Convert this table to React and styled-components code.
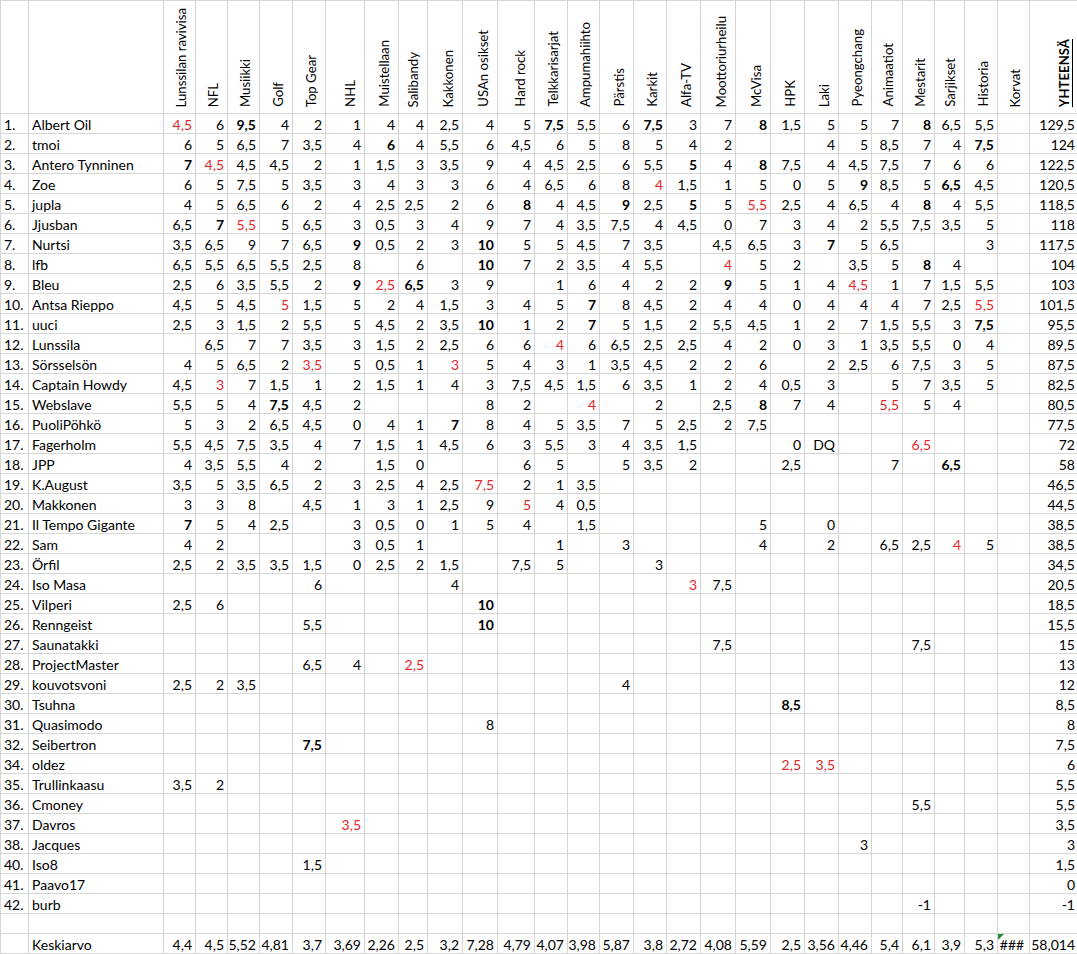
import React from "react";
import styled, { createGlobalStyle } from "styled-components";

const GlobalStyle = createGlobalStyle`
  html, body {
    margin: 0;
    padding: 0;
    background: #fff;
    overflow: hidden;
  }
`;

const Page = styled.div`
  width: 1077px;
  height: 954px;
  overflow: hidden;
  background: #fff;
`;

const Sheet = styled.table`
  width: 1078px;
  table-layout: fixed;
  border-collapse: collapse;
  font-family: Lato, "Liberation Sans", sans-serif;
  font-size: 14px;
  color: #000;

  td, th {
    border: 1px solid #d6d6d6;
  }
`;

const HeadRow = styled.tr`
  height: 113px;
`;

const Row = styled.tr`
  height: 20px;
`;

const HeadCell = styled.th`
  padding: 0 5px 3px 0;
  vertical-align: bottom;
  text-align: right;
  font-weight: normal;
  overflow: visible;
`;

const HeadLabel = styled.span`
  display: inline-block;
  writing-mode: vertical-rl;
  transform: rotate(180deg);
  white-space: nowrap;
  font-size: 13.2px;
  line-height: 18px;
  font-weight: ${(props) => (props.$total ? 700 : 400)};
  text-decoration: ${(props) => (props.$total ? "underline" : "none")};
  text-underline-offset: 1px;
`;

const RankCell = styled.td`
  padding: 0 0 0 3px;
  line-height: 17px;
  vertical-align: bottom;
  white-space: nowrap;
`;

const NameCell = styled.td`
  padding: 0 0 0 3px;
  line-height: 17px;
  vertical-align: bottom;
  white-space: nowrap;
  overflow: visible;
`;

const NumCell = styled.td`
  position: relative;
  padding: 0 3px 0 0;
  line-height: 17px;
  vertical-align: bottom;
  text-align: ${(props) => props.$align || "right"};
  white-space: nowrap;
  font-weight: ${(props) => (props.$bold ? 700 : 400)};
  color: ${(props) => (props.$red ? "#e3262b" : "#000")};
`;

const ErrorMark = styled.span`
  position: absolute;
  top: 0;
  left: 0;
  width: 0;
  height: 0;
  border-top: 6px solid #1f8a3b;
  border-right: 6px solid transparent;
`;

const widths = [
  28, 135, 32, 32, 32, 33, 33, 39, 34, 29, 35, 35, 37, 33, 32, 34, 33, 34, 35,
  35, 34, 34, 33, 31, 32, 30, 33, 32, 49,
];

const headers = [
  "Lunssilan ravivisa",
  "NFL",
  "Musiikki",
  "Golf",
  "Top Gear",
  "NHL",
  "Muistellaan",
  "Salibandy",
  "Kakkonen",
  "USAn osikset",
  "Hard rock",
  "Telkkarisarjat",
  "Ampumahiihto",
  "Pärstis",
  "Karkit",
  "Alfa-TV",
  "Moottoriurheilu",
  "McVisa",
  "HPK",
  "Laki",
  "Pyeongchang",
  "Animaatiot",
  "Mestarit",
  "Sarjikset",
  "Historia",
  "Korvat",
];

// "*" = lihavoitu, "!" = punainen
const dense = [
  ["1.", "Albert Oil", "!4,5|6|*9,5|4|2|1|4|4|2,5|4|5", "*7,5|5,5|6|*7,5|3|7|*8|1,5|5|5|7|*8|6,5|5,5|", "129,5"],
  ["2.", "tmoi", "6|5|6,5|7|3,5|4|*6|4|5,5|6|4,5", "6|5|8|5|4|2|||4|5|8,5|7|4|*7,5|", "124"],
  ["3.", "Antero Tynninen", "*7|!4,5|4,5|4,5|2|1|1,5|3|3,5|9|4", "4,5|2,5|6|5,5|*5|4|*8|7,5|4|4,5|7,5|7|6|6|", "122,5"],
  ["4.", "Zoe", "6|5|7,5|5|3,5|3|4|3|3|6|4", "6,5|6|8|!4|1,5|1|5|0|5|*9|8,5|5|*6,5|4,5|", "120,5"],
  ["5.", "jupla", "4|5|6,5|6|2|4|2,5|2,5|2|6|*8", "4|4,5|*9|2,5|*5|5|!5,5|2,5|4|6,5|4|*8|4|5,5|", "118,5"],
  ["6.", "Jjusban", "6,5|*7|!5,5|5|6,5|3|0,5|3|4|9|7", "4|3,5|7,5|4|4,5|0|7|3|4|2|5,5|7,5|3,5|5|", "118"],
  ["7.", "Nurtsi", "3,5|6,5|9|7|6,5|*9|0,5|2|3|*10|5", "5|4,5|7|3,5||4,5|6,5|3|*7|5|6,5|||3|", "117,5"],
  ["8.", "lfb", "6,5|5,5|6,5|5,5|2,5|8||6||*10|7", "2|3,5|4|5,5||!4|5|2||3,5|5|*8|4||", "104"],
  ["9.", "Bleu", "2,5|6|3,5|5,5|2|*9|!2,5|*6,5|3|9|", "1|6|4|2|2|*9|5|1|4|!4,5|1|7|1,5|5,5|", "103"],
  ["10.", "Antsa Rieppo", "4,5|5|4,5|!5|1,5|5|2|4|1,5|3|4", "5|*7|8|4,5|2|4|4|0|4|4|4|7|2,5|!5,5|", "101,5"],
  ["11.", "uuci", "2,5|3|1,5|2|5,5|5|4,5|2|3,5|*10|1", "2|*7|5|1,5|2|5,5|4,5|1|2|7|1,5|5,5|3|*7,5|", "95,5"],
  ["12.", "Lunssila", "|6,5|7|7|3,5|3|1,5|2|2,5|6|6", "!4|6|6,5|2,5|2,5|4|2|0|3|1|3,5|5,5|0|4|", "89,5"],
  ["13.", "Sörsselsön", "4|5|6,5|2|!3,5|5|0,5|1|!3|5|4", "3|1|3,5|4,5|2|2|6||2|2,5|6|7,5|3|5|", "87,5"],
  ["14.", "Captain Howdy", "4,5|!3|7|1,5|1|2|1,5|1|4|3|7,5", "4,5|1,5|6|3,5|1|2|4|0,5|3||5|7|3,5|5|", "82,5"],
];

const sparse = [
  ["15.", "Webslave", { 0: "5,5", 1: "5", 2: "4", 3: "*7,5", 4: "4,5", 5: "2", 9: "8", 10: "2", 12: "!4", 14: "2", 16: "2,5", 17: "*8", 18: "7", 19: "4", 21: "!5,5", 22: "5", 23: "4" }, "80,5"],
  ["16.", "PuoliPöhkö", { 0: "5", 1: "3", 2: "2", 3: "6,5", 4: "4,5", 5: "0", 6: "4", 7: "1", 8: "*7", 9: "8", 10: "4", 11: "5", 12: "3,5", 13: "7", 14: "5", 15: "2,5", 16: "2", 17: "7,5" }, "77,5"],
  ["17.", "Fagerholm", { 0: "5,5", 1: "4,5", 2: "7,5", 3: "3,5", 4: "4", 5: "7", 6: "1,5", 7: "1", 8: "4,5", 9: "6", 10: "3", 11: "5,5", 12: "3", 13: "4", 14: "3,5", 15: "1,5", 18: "0", 19: "DQ", 22: "!6,5" }, "72"],
  ["18.", "JPP", { 0: "4", 1: "3,5", 2: "5,5", 3: "4", 4: "2", 6: "1,5", 7: "0", 10: "6", 11: "5", 13: "5", 14: "3,5", 15: "2", 18: "2,5", 21: "7", 23: "*6,5" }, "58"],
  ["19.", "K.August", { 0: "3,5", 1: "5", 2: "3,5", 3: "6,5", 4: "2", 5: "3", 6: "2,5", 7: "4", 8: "2,5", 9: "!7,5", 10: "2", 11: "1", 12: "3,5" }, "46,5"],
  ["20.", "Makkonen", { 0: "3", 1: "3", 2: "8", 4: "4,5", 5: "1", 6: "3", 7: "1", 8: "2,5", 9: "9", 10: "!5", 11: "4", 12: "0,5" }, "44,5"],
  ["21.", "Il Tempo Gigante", { 0: "*7", 1: "5", 2: "4", 3: "2,5", 5: "3", 6: "0,5", 7: "0", 8: "1", 9: "5", 10: "4", 12: "1,5", 17: "5", 19: "0" }, "38,5"],
  ["22.", "Sam", { 0: "4", 1: "2", 5: "3", 6: "0,5", 7: "1", 11: "1", 13: "3", 17: "4", 19: "2", 21: "6,5", 22: "2,5", 23: "!4", 24: "5" }, "38,5"],
  ["23.", "Örfil", { 0: "2,5", 1: "2", 2: "3,5", 3: "3,5", 4: "1,5", 5: "0", 6: "2,5", 7: "2", 8: "1,5", 10: "7,5", 11: "5", 14: "3" }, "34,5"],
  ["24.", "Iso Masa", { 4: "6", 8: "4", 15: "!3", 16: "7,5" }, "20,5"],
  ["25.", "Vilperi", { 0: "2,5", 1: "6", 9: "*10" }, "18,5"],
  ["26.", "Renngeist", { 4: "5,5", 9: "*10" }, "15,5"],
  ["27.", "Saunatakki", { 16: "7,5", 22: "7,5" }, "15"],
  ["28.", "ProjectMaster", { 4: "6,5", 5: "4", 7: "!2,5" }, "13"],
  ["29.", "kouvotsvoni", { 0: "2,5", 1: "2", 2: "3,5", 13: "4" }, "12"],
  ["30.", "Tsuhna", { 18: "*8,5" }, "8,5"],
  ["31.", "Quasimodo", { 9: "8" }, "8"],
  ["32.", "Seibertron", { 4: "*7,5" }, "7,5"],
  ["34.", "oldez", { 18: "!2,5", 19: "!3,5" }, "6"],
  ["35.", "Trullinkaasu", { 0: "3,5", 1: "2" }, "5,5"],
  ["36.", "Cmoney", { 22: "5,5" }, "5,5"],
  ["37.", "Davros", { 5: "!3,5" }, "3,5"],
  ["38.", "Jacques", { 20: "3" }, "3"],
  ["40.", "Iso8", { 4: "1,5" }, "1,5"],
  ["41.", "Paavo17", {}, "0"],
  ["42.", "burb", { 22: "-1" }, "-1"],
];

const averages = [
  "4,4", "4,5", "5,52", "4,81", "3,7", "3,69", "2,26", "2,5", "3,2", "7,28",
  "4,79", "4,07", "3,98", "5,87", "3,8", "2,72", "4,08", "5,59", "2,5", "3,56",
  "4,46", "5,4", "6,1", "3,9", "5,3", "###",
];

const rows = [
  ...dense.map(([rank, name, left, right, total]) => ({
    rank,
    name,
    cells: [...left.split("|"), ...right.split("|")],
    total,
  })),
  ...sparse.map(([rank, name, map, total]) => ({
    rank,
    name,
    cells: headers.map((_, i) => map[i] || ""),
    total,
  })),
];

function Value({ raw }) {
  const bold = raw.startsWith("*");
  const red = raw.startsWith("!");
  const text = bold || red ? raw.slice(1) : raw;
  return (
    <NumCell $bold={bold} $red={red}>
      {text}
    </NumCell>
  );
}

function App() {
  return (
    <Page>
      <GlobalStyle />
      <Sheet>
        <colgroup>
          {widths.map((w, i) => (
            <col key={i} style={{ width: w }} />
          ))}
        </colgroup>
        <thead>
          <HeadRow>
            <HeadCell />
            <HeadCell />
            {headers.map((h) => (
              <HeadCell key={h}>
                <HeadLabel>{h}</HeadLabel>
              </HeadCell>
            ))}
            <HeadCell>
              <HeadLabel $total>YHTEENSÄ</HeadLabel>
            </HeadCell>
          </HeadRow>
        </thead>
        <tbody>
          {rows.map((row) => (
            <Row key={row.rank}>
              <RankCell>{row.rank}</RankCell>
              <NameCell>{row.name}</NameCell>
              {row.cells.map((c, i) => (
                <Value key={i} raw={c} />
              ))}
              <NumCell>{row.total}</NumCell>
            </Row>
          ))}
          <Row>
            <RankCell />
            <NameCell />
            {headers.map((h) => (
              <NumCell key={h} />
            ))}
            <NumCell />
          </Row>
          <Row>
            <RankCell />
            <NameCell>Keskiarvo</NameCell>
            {averages.map((a, i) =>
              a === "###" ? (
                <NumCell key={i} $align="center">
                  <ErrorMark />
                  {a}
                </NumCell>
              ) : (
                <NumCell key={i}>{a}</NumCell>
              )
            )}
            <NumCell>58,014</NumCell>
          </Row>
        </tbody>
      </Sheet>
    </Page>
  );
}

export default App;
